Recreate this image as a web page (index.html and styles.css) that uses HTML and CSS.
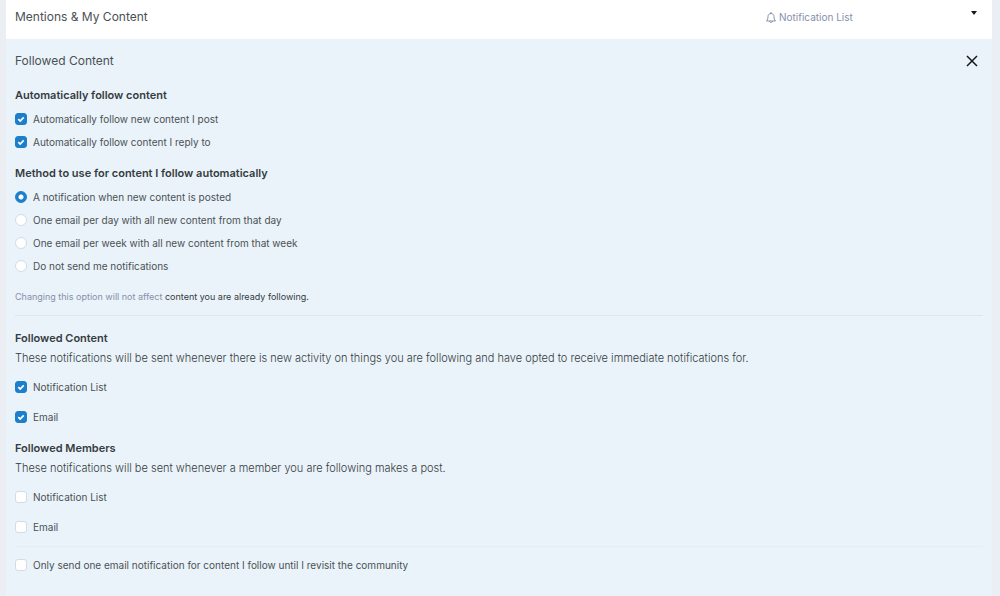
FILE: index.html
```html
<!DOCTYPE html>
<html lang="en">
<head>
    <meta charset="UTF-8">
    <meta name="viewport" content="width=device-width, initial-scale=1.0">
    <title>Notification Settings</title>
    <link rel="stylesheet" href="styles.css">
</head>
<body>

    <main class="settings">
        <header class="summary-row">
            <h2 class="row-title">Mentions &amp; My Content</h2>
            <div class="summary-method">
                <svg class="bell" viewBox="0 0 20 22" aria-hidden="true">
                    <path d="M10 0v3M10 3C6 3 4 6 4 9c0 5-1 6-3 9h18C17 15 16 14 16 9c0-3-2-6-6-6zM7 18c0 4 6 4 6 0"/>
                </svg>
                <span>Notification List</span>
            </div>
            <button type="button" class="icon-btn" aria-label="Expand">
                <svg class="caret" viewBox="0 0 6 4" aria-hidden="true"><path d="M0 0h6L3 4z"/></svg>
            </button>
        </header>

        <form class="panel">
            <div class="panel-head">
                <h2 class="row-title">Followed Content</h2>
                <button type="button" class="icon-btn" aria-label="Close">
                    <svg class="close" viewBox="0 0 12 12" aria-hidden="true"><path d="M1 1l10 10M11 1L1 11"/></svg>
                </button>
            </div>

            <fieldset class="group">
                <legend class="group-title">Automatically follow content</legend>
                <div class="option">
                    <input type="checkbox" id="followNew" class="check" checked>
                    <label for="followNew">Automatically follow new content I post</label>
                </div>
                <div class="option">
                    <input type="checkbox" id="followReply" class="check" checked>
                    <label for="followReply">Automatically follow content I reply to</label>
                </div>
            </fieldset>

            <fieldset class="group">
                <legend class="group-title">Method to use for content I follow automatically</legend>
                <div class="option">
                    <input type="radio" id="methodNow" name="method" class="radio" checked>
                    <label for="methodNow">A notification when new content is posted</label>
                </div>
                <div class="option">
                    <input type="radio" id="methodDay" name="method" class="radio">
                    <label for="methodDay">One email per day with all new content from that day</label>
                </div>
                <div class="option">
                    <input type="radio" id="methodWeek" name="method" class="radio">
                    <label for="methodWeek">One email per week with all new content from that week</label>
                </div>
                <div class="option">
                    <input type="radio" id="methodNone" name="method" class="radio">
                    <label for="methodNone">Do not send me notifications</label>
                </div>
            </fieldset>
            <p class="hint">Changing this option will not affect <a href="#">content you are already following.</a></p>

            <hr class="divider">

            <fieldset class="group group-spaced">
                <legend class="group-title">Followed Content</legend>
                <p class="description">These notifications will be sent whenever there is new activity on things you are following and have opted to receive immediate notifications for.</p>
                <div class="option">
                    <input type="checkbox" id="contentList" class="check" checked>
                    <label for="contentList">Notification List</label>
                </div>
                <div class="option">
                    <input type="checkbox" id="contentEmail" class="check" checked>
                    <label for="contentEmail">Email</label>
                </div>
            </fieldset>

            <fieldset class="group group-spaced">
                <legend class="group-title">Followed Members</legend>
                <p class="description">These notifications will be sent whenever a member you are following makes a post.</p>
                <div class="option">
                    <input type="checkbox" id="membersList" class="check">
                    <label for="membersList">Notification List</label>
                </div>
                <div class="option">
                    <input type="checkbox" id="membersEmail" class="check">
                    <label for="membersEmail">Email</label>
                </div>
            </fieldset>

            <hr class="divider divider-light">

            <div class="group-spaced">
                <div class="option">
                    <input type="checkbox" id="onlyOne" class="check">
                    <label for="onlyOne">Only send one email notification for content I follow until I revisit the community</label>
                </div>
            </div>
        </form>
    </main>

</body>
</html>
```
FILE: styles.css
```css
* {
    box-sizing: border-box;
}

body {
    margin: 0;
    padding: 0 8px 0 6px;
    background-color: #ebeff4;
    color: #353c41;
    font-family: Inter, "Liberation Sans", sans-serif;
    font-size: 10px;
    line-height: 20px;
}

.settings {
    display: flex;
    flex-direction: column;
    min-height: 100vh;
    background-color: #eaf3f9;
}

.summary-row {
    display: grid;
    grid-template-columns: 1fr 200px 16px;
    align-items: start;
    padding: 7px 10px 12px 9px;
    background-color: #fff;
}

.row-title {
    margin: 0;
    color: #4a5155;
    font-size: 12px;
    font-weight: 400;
    line-height: 20px;
}

.summary-method {
    display: flex;
    align-items: center;
    gap: 3px;
    color: #8790ab;
}

.bell {
    width: 10px;
    height: 11px;
    fill: none;
    stroke: #8790ab;
    stroke-width: 2;
}

.icon-btn {
    display: flex;
    align-items: center;
    justify-content: center;
    width: 16px;
    height: 12px;
    padding: 0;
    border: none;
    background: none;
    color: #16191c;
    cursor: pointer;
}

.caret {
    width: 6px;
    height: 4px;
    fill: currentColor;
}

.close {
    width: 12px;
    height: 12px;
    fill: none;
    stroke: currentColor;
    stroke-width: 1.5;
}

.panel {
    padding: 12px 9px 16px;
}

.panel-head {
    display: flex;
    align-items: center;
    justify-content: space-between;
    padding-right: 3px;
    margin-bottom: 14px;
}

.group {
    min-width: 0;
    margin: 0 0 10px;
    padding: 0;
    border: none;
}

.group-title {
    padding: 0;
    margin-bottom: 2px;
    font-size: 11px;
    font-weight: 600;
}

.option {
    display: flex;
    align-items: center;
    gap: 6px;
    height: 23px;
    color: #4a5155;
}

.check,
.radio {
    appearance: none;
    flex: none;
    width: 12px;
    height: 12px;
    margin: 0;
    border: 1px solid #d3dce6;
    background: #fff;
}

.check {
    border-radius: 3px;
}

.check:checked {
    border-color: #1b7fcc;
    background: #1b7fcc url("data:image/svg+xml,%3Csvg xmlns='http://www.w3.org/2000/svg' viewBox='0 0 10 10'%3E%3Cpath d='M2.300 5.100l1.900 1.900 3.500-3.700' fill='none' stroke='white' stroke-width='1.700'/%3E%3C/svg%3E") center / 10px 10px no-repeat;
}

.radio {
    border-radius: 50%;
}

.radio:checked {
    border-color: #1b7fcc;
    background: radial-gradient(circle, #fff 2px, #1b7fcc 3px);
}

.hint {
    margin: 0 0 8px;
    color: #8790ab;
    font-size: 9px;
}

.hint a {
    color: #353c41;
    text-decoration: none;
}

.divider {
    height: 1px;
    margin: 0 0 12px;
    border: none;
    background-color: #dde5ee;
}

.divider-light {
    margin-bottom: 3px;
    background-color: #e4edf5;
}

.group-spaced {
    margin-bottom: 4px;
}

.group-spaced + .group-spaced {
    margin-top: 6px;
}

.group-spaced .group-title {
    margin-bottom: 0;
}

.group-spaced .option {
    height: 30px;
}

.description {
    margin: 0 0 4px;
    font-size: 11px;
    font-weight: 300;
}
```
